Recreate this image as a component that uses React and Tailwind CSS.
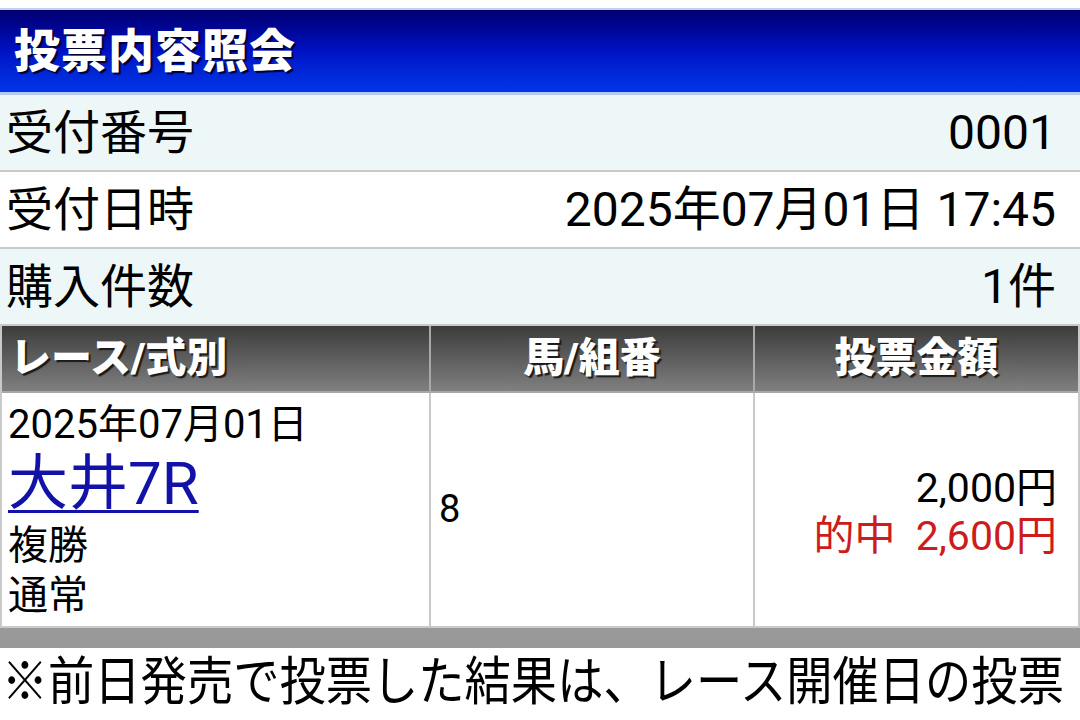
const font = { fontFamily: 'Roboto, "Noto Sans CJK JP", sans-serif' };

function InfoRow({ label, value, shaded }) {
  return (
    <div className={`flex h-[77px] items-center justify-between border-b-2 border-[#c9c9c9] pl-[6px] pr-[24px] text-[47px] leading-none text-black ${shaded ? "bg-[#eef7f7]" : "bg-white"}`}>
      <span>{label}</span>
      <span className="text-[48px]">{value}</span>
    </div>
  );
}

function HeadCell({ children, align = "center", last }) {
  return (
    <div className={`flex h-full items-center px-2 text-[41px] font-black leading-none text-white [text-shadow:2px_2px_1px_#1a1a1a] ${align === "left" ? "justify-start" : "justify-center"} ${last ? "" : "border-r-2 border-[#a8a8a8]"}`}>
      {children}
    </div>
  );
}

export default function App() {
  return (
    <div className="h-[720px] w-[1080px] overflow-hidden bg-white" style={font}>
      <div className="h-2 bg-white" />
      <div className="h-[2px] bg-[#c9cdee]" />
      <header className="flex h-[82px] items-center bg-linear-to-b from-[#000070] via-[#0012c4] to-[#0035e8] px-[14px]">
        <h1 className="text-[46px] font-black leading-none tracking-[1px] text-white [text-shadow:2px_2px_1px_#000033]">投票内容照会</h1>
      </header>
      <div className="h-[3px] bg-[#b8c8f0]" />

      <InfoRow label="受付番号" value="0001" shaded />
      <InfoRow label="受付日時" value="2025年07月01日 17:45" />
      <InfoRow label="購入件数" value="1件" shaded />

      <div className="border-x-2 border-[#c9c9c9]">
        <div className="grid h-[67px] grid-cols-[429px_324px_1fr] border-b-2 border-[#a8a8a8] bg-linear-to-b from-[#3d3d3d] to-[#808080]">
          <HeadCell align="left">レース/式別</HeadCell>
          <HeadCell>馬/組番</HeadCell>
          <HeadCell last>投票金額</HeadCell>
        </div>

        <div className="grid h-[235px] grid-cols-[429px_324px_1fr] border-b-2 border-[#c9c9c9] bg-white text-black">
          <div className="flex flex-col border-r-2 border-[#c9c9c9] pl-[6px] pt-[10px]">
            <span className="text-[40px] leading-[44px]">2025年07月01日</span>
            <a href="#" className="w-fit text-[60px] leading-[74px] text-[#1212a8] underline decoration-[3px] underline-offset-[6px]">大井7R</a>
            <span className="text-[40px] leading-[50px]">複勝</span>
            <span className="text-[40px] leading-[50px]">通常</span>
          </div>
          <div className="flex items-center border-r-2 border-[#c9c9c9] px-2 text-[38px]">8</div>
          <div className="flex flex-col items-end justify-center pr-[21px] pt-[4px] text-[41px] leading-[48px]">
            <span>2,000円</span>
            <span className="text-[#cc1c1c]">的中&nbsp;&nbsp;2,600円</span>
          </div>
        </div>
      </div>

      <div className="h-5 bg-[#999999]" />
      <p className="origin-left scale-x-[0.89] whitespace-nowrap pl-[2px] pt-[2px] text-[52px] leading-[66px] text-black">
        ※前日発売で投票した結果は、レース開催日の投票
      </p>
    </div>
  );
}
